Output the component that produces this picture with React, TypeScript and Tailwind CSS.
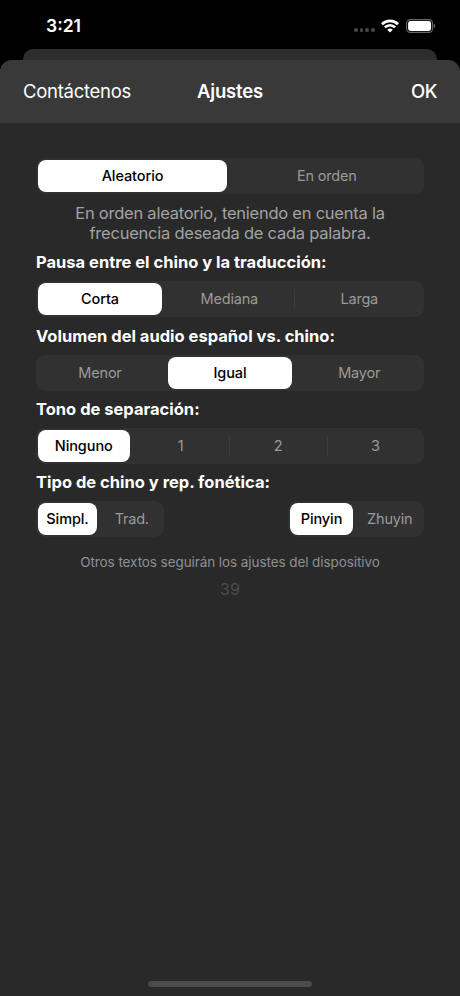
import { useState } from 'react';
import clsx from 'clsx';

interface SegmentedProps {
    options: string[];
    initial?: number;
    className?: string;
    columns: string;
}

function Segmented({ options, initial = 0, className, columns }: SegmentedProps) {
    const [selected, setSelected] = useState(initial);

    return (
        <div className={clsx('grid h-[36px] gap-[6px] rounded-[9px] bg-[#313131] p-[2px]', columns, className)}>
            {options.map((option, i) => {
                const active = i === selected;
                // Separators only show between two unselected segments
                const divider = i > 0 && !active && i - 1 !== selected;
                return (
                    <button
                        key={option}
                        onClick={() => setSelected(i)}
                        className={clsx(
                            'relative flex h-[32px] items-center justify-center whitespace-nowrap rounded-[8px] text-[14.5px]',
                            active ? 'bg-white font-medium tracking-[-0.1px] text-black' : 'tracking-[-0.2px] text-[#9a9a9a]',
                            i > 0 && !active && 'pr-[1.5px]',
                        )}
                    >
                        {divider && <span className="absolute -left-[4px] top-[6px] h-[20px] w-px bg-[#3d3d3d]" />}
                        {option}
                    </button>
                );
            })}
        </div>
    );
}

function SectionTitle({ children }: { children: string }) {
    return (
        <h2 className="flex h-[37.3px] items-center whitespace-nowrap text-[16.5px] font-bold text-white">
            {children}
        </h2>
    );
}

function StatusBar() {
    return (
        <div className="flex h-[49px] items-center justify-between pl-[46px] pr-[24px] pt-[2px]">
            <span className="pt-[2px] text-[17.5px] font-semibold text-white">3:21</span>
            <div className="flex items-center">
                <div className="mr-[6px] mt-[9px] flex gap-[2px]">
                    {[0, 1, 2, 3].map((dot) => (
                        <span key={dot} className="size-[3.8px] rounded-full bg-[#484848]" />
                    ))}
                </div>
                <svg width="18" height="14" viewBox="0 0 18 14" className="mr-[7px]" fill="none" stroke="white">
                    <path d="M1 5.2a11.4 11.4 0 0 1 16 0" strokeWidth="2.8" />
                    <path d="M3.9 8.4a7.2 7.2 0 0 1 10.2 0" strokeWidth="2.6" />
                    <path d="M9 13.6 6.2 10.8a4 4 0 0 1 5.6 0z" fill="white" stroke="none" />
                </svg>
                <svg width="30" height="14" viewBox="0 0 30 14">
                    <rect x="0.6" y="0.6" width="26" height="12.8" rx="3.8" fill="none" stroke="#686868" strokeWidth="1.1" />
                    <rect x="2.1" y="2.1" width="23" height="9.8" rx="2.4" fill="white" />
                    <path d="M27.8 4.8c1.9.7 1.9 3.7 0 4.4z" fill="#686868" />
                </svg>
            </div>
        </div>
    );
}

export default function App() {
    return (
        <div className="flex h-[996px] w-[460px] flex-col overflow-hidden bg-black font-['Inter','Liberation_Sans',sans-serif]">
            <StatusBar />

            {/* Edge of the screen underneath the sheet */}
            <div className="mx-[23px] -mb-[12px] h-[23px] shrink-0 rounded-t-[10px] bg-[#2b2d2e]" />

            <div className="relative flex flex-1 flex-col overflow-hidden rounded-t-[12px] bg-[#292929]">
                <header className="grid h-[63px] shrink-0 grid-cols-3 items-center bg-[#393939] px-[23px] text-[18.5px] text-white">
                    <button className="text-left tracking-[-0.28px]">Contáctenos</button>
                    <h1 className="text-center font-semibold tracking-[-0.15px]">Ajustes</h1>
                    <button className="text-right font-medium tracking-[-0.4px]">OK</button>
                </header>

                <main className="flex flex-1 flex-col px-[36px] pt-[35px]">
                    <Segmented options={['Aleatorio', 'En orden']} columns="grid-cols-2" />
                    <p className="mt-[9px] h-[40px] text-center text-[16.5px] leading-[20px] tracking-[-0.24px] text-[#a2a2a2]">
                        En orden aleatorio, teniendo en cuenta la
                        <br />
                        frecuencia deseada de cada palabra.
                    </p>

                    <div className="mt-[1px]">
                        <SectionTitle>Pausa entre el chino y la traducción:</SectionTitle>
                        <Segmented options={['Corta', 'Mediana', 'Larga']} columns="grid-cols-3" />
                        <SectionTitle>Volumen del audio español vs. chino:</SectionTitle>
                        <Segmented options={['Menor', 'Igual', 'Mayor']} initial={1} columns="grid-cols-3" />
                        <SectionTitle>Tono de separación:</SectionTitle>
                        <Segmented options={['Ninguno', '1', '2', '3']} columns="grid-cols-4" />
                        <SectionTitle>Tipo de chino y rep. fonética:</SectionTitle>
                        <div className="flex justify-between">
                            <Segmented options={['Simpl.', 'Trad.']} columns="grid-cols-2" className="w-[128px]" />
                            <Segmented options={['Pinyin', 'Zhuyin']} columns="grid-cols-2" className="w-[136px]" />
                        </div>
                    </div>

                    <p className="mt-[15px] text-center text-[13.5px] leading-[20px] tracking-[-0.08px] text-[#8f8f8f]">
                        Otros textos seguirán los ajustes del dispositivo
                    </p>
                    <p className="mt-[7px] text-center text-[16px] leading-[20px] text-[#4d4d4d]">39</p>
                </main>

                {/* Home indicator */}
                <div className="mx-auto mb-[9px] h-[6px] w-[164px] shrink-0 rounded-full bg-[#4b4b4b]" />
            </div>
        </div>
    );
}
